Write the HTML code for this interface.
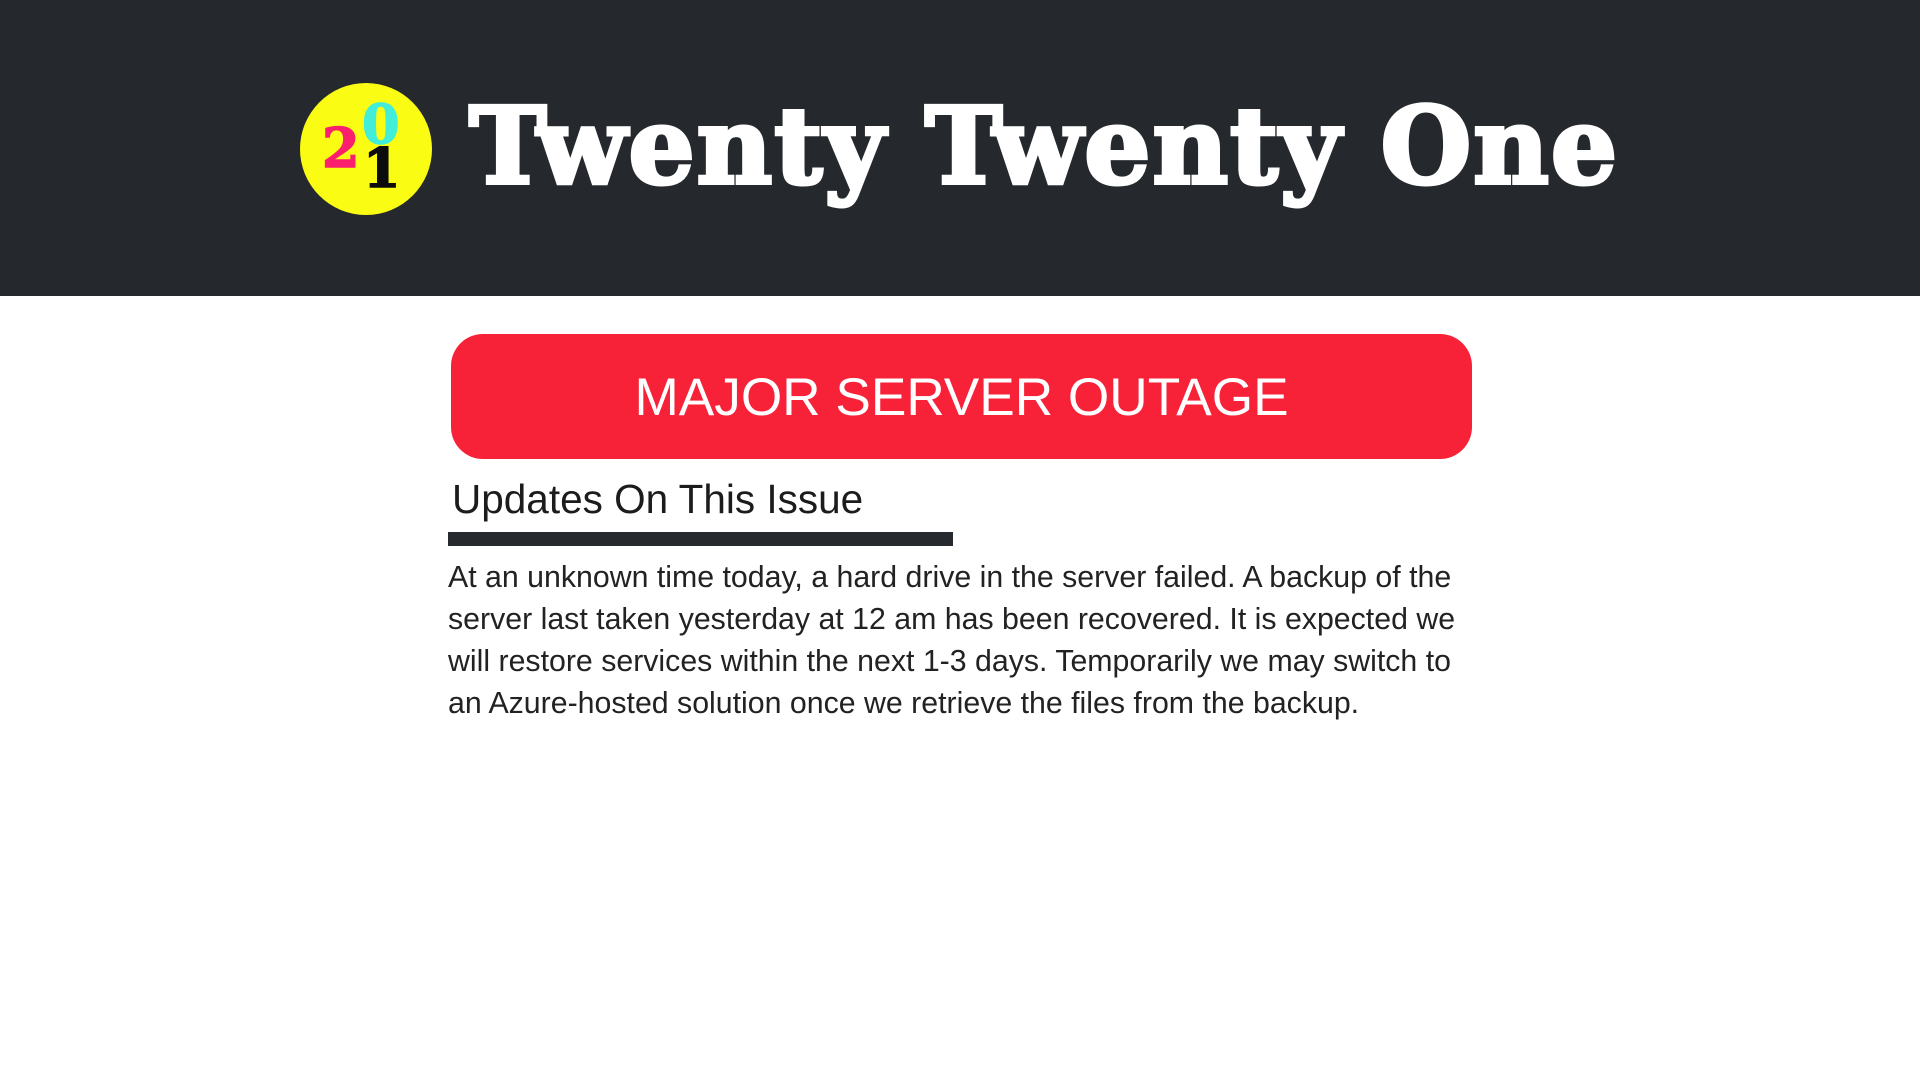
<!DOCTYPE html>
<html><head><meta charset="utf-8"><style>
body{margin:0;width:1920px;height:1080px;background:#fff;position:relative;overflow:hidden;font-family:"Liberation Sans",sans-serif}
.hdr{position:absolute;left:0;top:0;width:1920px;height:296px;background:#25292e}
.circle{position:absolute;left:300px;top:83px;width:132px;height:132px;border-radius:50%;background:#fafd13}
.d{position:absolute;font-family:"DejaVu Serif",serif;font-weight:bold;line-height:1;font-size:54px}
.title{position:absolute;left:469px;top:93px;font-family:"DejaVu Serif",serif;font-weight:bold;font-size:106px;color:#fff;line-height:1;white-space:nowrap;transform-origin:left top;-webkit-text-stroke:4px #fff;letter-spacing:2px}
.red{position:absolute;left:451px;top:334px;width:1021px;height:125px;border-radius:32px;background:#f72238;color:#fff;font-size:53.2px;text-align:center;line-height:127px}
.h2{position:absolute;left:452px;top:473px;font-size:40.5px;color:#1c1c1c;line-height:52px;white-space:nowrap}
.bar{position:absolute;left:448px;top:532px;width:505px;height:14px;background:#262a2f}
.p{position:absolute;left:448px;top:557px;width:1030px;font-size:30.3px;line-height:42px;color:#222}
</style></head><body>
<div class="hdr">
<div class="circle">
<span class="d" style="left:22px;top:38px;color:#fb1f6e;-webkit-text-stroke:1.5px #fb1f6e">2</span>
<span class="d" style="left:62px;top:14px;color:#42eed8;-webkit-text-stroke:1.5px #42eed8">0</span>
<span class="d" style="left:63px;top:58px;color:#0c0c0c;-webkit-text-stroke:1.5px #0c0c0c">1</span>
</div>
<div class="title" id="t">Twenty Twenty One</div>
</div>
<div class="red">MAJOR SERVER OUTAGE</div>
<div class="h2">Updates On This Issue</div>
<div class="bar"></div>
<div class="p">At an unknown time today, a hard drive in the server failed. A backup of the server last taken yesterday at 12 am has been recovered. It is expected we will restore services within the next 1-3 days. Temporarily we may switch to an Azure-hosted solution once we retrieve the files from the backup.</div>
<script>
var t=document.getElementById('t');var w=t.getBoundingClientRect().width;t.style.transform='scaleX('+(1150/w)+')';
</script>
</body></html>
